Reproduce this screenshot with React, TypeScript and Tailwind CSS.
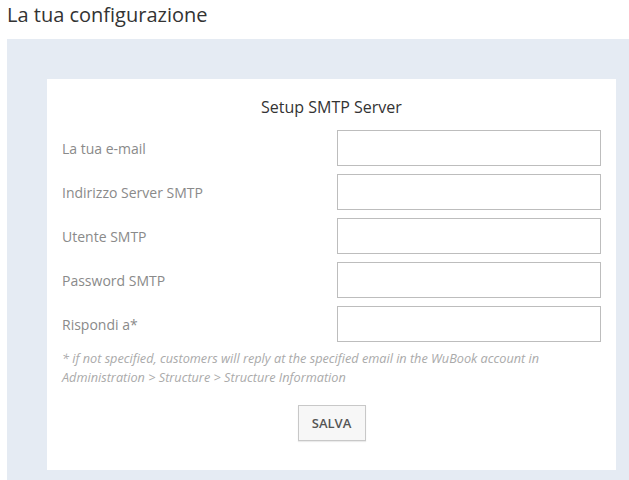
const FIELDS = ['La tua e-mail', 'Indirizzo Server SMTP', 'Utente SMTP', 'Password SMTP', 'Rispondi a*'];

export default function App() {
  return (
    <div className="h-[480px] bg-white font-['Open_Sans',sans-serif] overflow-hidden">
      <h1 className="pl-[7px] pt-[2px] mb-[11px] text-[20px] leading-[26px] text-[#333]">La tua configurazione</h1>

      <div className="ml-[7px] bg-[#e5ebf3] pl-10 pt-10 pb-[10px]">
        <div className="w-[569px] bg-white px-[15px] pt-[17px] pb-[29px]">
          <h2 className="text-center text-[16px] leading-[22px] text-[#333]">Setup SMTP Server</h2>

          <div className="mt-3 flex flex-col gap-2">
            {FIELDS.map((label) => (
              <div key={label} className="flex h-9 items-center justify-between">
                <label className="text-[14px] text-[#8a8a8a]">{label}</label>
                <input
                  type={label === 'Password SMTP' ? 'password' : 'text'}
                  className="h-9 w-[264px] border border-[#bdbdbd] bg-white px-2 text-[14px] outline-none"
                />
              </div>
            ))}
          </div>

          <p className="mt-[7px] text-[12.7px] italic leading-[19.2px] text-[#aaa]">
            * if not specified, customers will reply at the specified email in the WuBook account in Administration &gt; Structure &gt; Structure Information
          </p>

          <div className="mt-[18px] flex justify-center">
            <button className="h-9 w-[68px] border border-[#c8c8c8] bg-[#f7f7f7] text-[13px] font-semibold text-[#555] shadow-[0_1px_1px_rgba(0,0,0,0.08)]">
              SALVA
            </button>
          </div>
        </div>
      </div>
    </div>
  );
}
